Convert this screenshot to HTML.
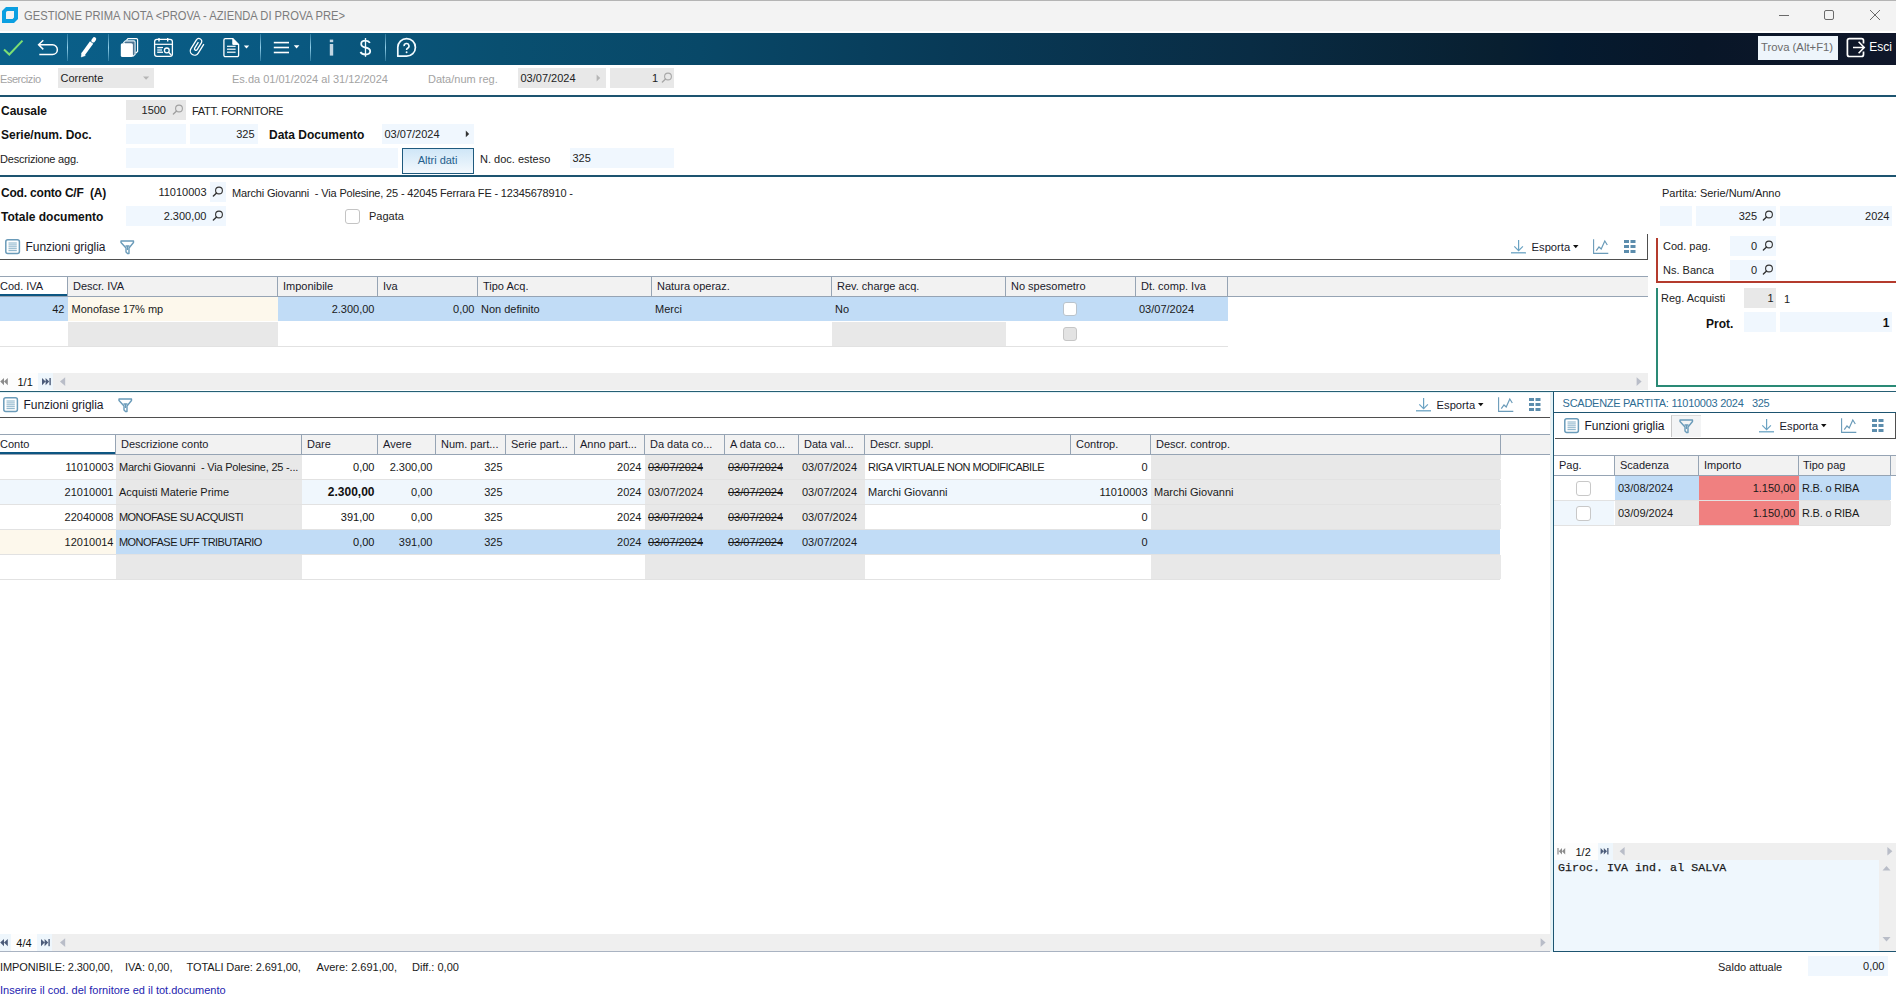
<!DOCTYPE html><html><head><meta charset="utf-8"><style>
html,body{margin:0;padding:0;width:1896px;height:996px;overflow:hidden;background:#fff;}
body{position:relative;font-family:"Liberation Sans",sans-serif;}
.a{position:absolute;}
.t{position:absolute;white-space:pre;}
svg.a{overflow:visible;}
</style></head><body>
<div class="a" style="left:0px;top:0px;width:1896px;height:31px;background:#f3f3f3;"></div>
<div class="a" style="left:0px;top:0px;width:1896px;height:1px;background:#b4b4b4;"></div>
<div class="a" style="left:0px;top:31px;width:1896px;height:1px;background:#ffffff;"></div>
<svg class="a" style="left:2px;top:7px;" width="16" height="16" viewBox="2 7 16 16"><path d="M6,7 H18 V19 L14,23 H2 V11 Z M7.6,11 H14 V17.6 L12.6,19 H6 V12.6 Q6,11 7.6,11 Z" fill="#0b9fe1" fill-rule="evenodd"/></svg>
<div class="t" style="top:9.83px;font-size:12.6px;line-height:12.6px;font-weight:400;color:#7c7c7c;left:24px;transform:scaleX(0.889);transform-origin:0 0;">GESTIONE PRIMA NOTA &lt;PROVA - AZIENDA DI PROVA PRE&gt;</div>
<svg class="a" style="left:1776px;top:8px;" width="110" height="16" viewBox="1776 8 110 16"><line x1="1779" y1="15.5" x2="1789" y2="15.5" stroke="#6a6a6a" stroke-width="1"/><rect x="1824.5" y="10.5" width="9" height="9" rx="1.5" fill="none" stroke="#6a6a6a" stroke-width="1"/><path d="M1870,10 L1880,20 M1880,10 L1870,20" stroke="#6a6a6a" stroke-width="1"/></svg>
<div class="a" style="left:0;top:33px;width:1896px;height:32px;background:linear-gradient(90deg,#0a608a 0px,#095880 300px,#094f70 500px,#084868 700px,#083a57 950px,#092c44 1250px,#081f30 1500px,#051b30 1560px,#081628 1700px,#10172a 1896px);"></div>
<div class="a" style="left:67px;top:34px;width:1px;height:27px;background:linear-gradient(180deg,rgba(140,210,240,0.25),rgba(160,220,245,0.9) 50%,rgba(140,210,240,0.25));"></div>
<div class="a" style="left:108px;top:34px;width:1px;height:27px;background:linear-gradient(180deg,rgba(140,210,240,0.25),rgba(160,220,245,0.9) 50%,rgba(140,210,240,0.25));"></div>
<div class="a" style="left:260px;top:34px;width:1px;height:27px;background:linear-gradient(180deg,rgba(140,210,240,0.25),rgba(160,220,245,0.9) 50%,rgba(140,210,240,0.25));"></div>
<div class="a" style="left:310px;top:34px;width:1px;height:27px;background:linear-gradient(180deg,rgba(140,210,240,0.25),rgba(160,220,245,0.9) 50%,rgba(140,210,240,0.25));"></div>
<div class="a" style="left:385px;top:34px;width:1px;height:27px;background:linear-gradient(180deg,rgba(140,210,240,0.25),rgba(160,220,245,0.9) 50%,rgba(140,210,240,0.25));"></div>
<svg class="a" style="left:2px;top:38px;" width="24" height="20" viewBox="2 38 24 20"><polyline points="4,49.5 9.3,54.5 22.5,40.6" fill="none" stroke="#7ddf73" stroke-width="2"/></svg>
<svg class="a" style="left:36px;top:38px;" width="24" height="20" viewBox="36 38 24 20"><path d="M43.3,40.2 L38.6,44.8 L43.3,49.4 M38.6,44.8 H52.5 A4.85,4.85 0 0 1 52.5,54.5 H39.3" fill="none" stroke="#fff" stroke-width="1.5"/></svg>
<svg class="a" style="left:78px;top:36px;" width="22" height="24" viewBox="78 36 22 24"><line x1="83.0" y1="54.4" x2="91.6" y2="42.5" stroke="#fff" stroke-width="4"/><path d="M81.3,57 L85.3,55.5 L81.8,52.9 Z" fill="#fff" stroke="#fff" stroke-width="0.6" stroke-linejoin="round"/><line x1="93.2" y1="40.6" x2="94.3" y2="39.1" stroke="#fff" stroke-width="3.8" stroke-linecap="round"/></svg>
<svg class="a" style="left:118px;top:36px;" width="24" height="24" viewBox="118 36 24 24"><path d="M126.4,40.4 L128,38.6 H136.4 Q137.6,38.6 137.6,39.8 V51.4 L135.6,53.2" fill="none" stroke="#fff" stroke-width="1.2"/><path d="M123.6,42.6 L125.4,40.9 H134 Q135.1,40.9 135.1,42 V54.4 L133,56.2 Z" fill="#4d7593" stroke="#e8f4fb" stroke-width="1.1"/><rect x="120.8" y="43.2" width="12.1" height="13.9" rx="1.6" fill="#fff"/></svg>
<svg class="a" style="left:152px;top:36px;" width="24" height="24" viewBox="152 36 24 24"><rect x="154.6" y="39.4" width="17.8" height="16.9" rx="2.4" fill="none" stroke="#fff" stroke-width="1.3"/><line x1="159" y1="38" x2="159" y2="41.4" stroke="#fff" stroke-width="1.4"/><line x1="167.7" y1="38" x2="167.7" y2="41.4" stroke="#fff" stroke-width="1.4"/><line x1="155" y1="44.3" x2="172" y2="44.3" stroke="#fff" stroke-width="1.2"/><rect x="157.2" y="46.9" width="5.8" height="1.2" fill="#fff"/><rect x="157.2" y="48.6" width="4.8" height="2.6" fill="#8fbcd6"/><rect x="157.2" y="51.6" width="5.8" height="1.3" fill="#fff"/><circle cx="166.8" cy="50.4" r="2.4" fill="none" stroke="#fff" stroke-width="1.3"/><line x1="168.6" y1="52.3" x2="171.2" y2="55" stroke="#fff" stroke-width="1.3"/></svg>
<svg class="a" style="left:186px;top:36px;" width="22" height="24" viewBox="186 36 22 24"><g transform="translate(194.6,50.9) rotate(32)"><path d="M4.3,-10.6 V0 A4.3,4.3 0 0 1 -4.3,0 V-10.3 A2.9,2.9 0 0 1 1.5,-10.3 V-2.4 A1.45,1.45 0 0 1 -1.4,-2.4 V-9.4" fill="none" stroke="#fff" stroke-width="1.3"/></g></svg>
<svg class="a" style="left:222px;top:36px;" width="30" height="24" viewBox="222 36 30 24"><path d="M225.3,38.6 H232.8 L238.6,44.4 V55.2 A1.4,1.4 0 0 1 237.2,56.6 H225.3 A1.4,1.4 0 0 1 223.9,55.2 V40 A1.4,1.4 0 0 1 225.3,38.6 Z" fill="none" stroke="#fff" stroke-width="1.3"/><path d="M232.8,38.6 V44.4 H238.6" fill="#fff" stroke="#fff" stroke-width="1"/><line x1="227" y1="46.3" x2="235.6" y2="46.3" stroke="#fff" stroke-width="1.2"/><line x1="227" y1="49.2" x2="235.6" y2="49.2" stroke="#fff" stroke-width="1.2"/><line x1="227" y1="52.2" x2="235.6" y2="52.2" stroke="#fff" stroke-width="1.2"/><path d="M243.8,45.6 H249.2 L246.5,48.6 Z" fill="#fff"/></svg>
<svg class="a" style="left:270px;top:36px;" width="34" height="24" viewBox="270 36 34 24"><line x1="273.8" y1="42.6" x2="289" y2="42.6" stroke="#fff" stroke-width="1.6"/><line x1="273.8" y1="47.5" x2="289" y2="47.5" stroke="#fff" stroke-width="1.6"/><line x1="273.8" y1="52.5" x2="289" y2="52.5" stroke="#fff" stroke-width="1.6"/><path d="M293.8,45.2 H299.4 L296.6,48.4 Z" fill="#fff"/></svg>
<svg class="a" style="left:326px;top:36px;" width="10" height="24" viewBox="326 36 10 24"><rect x="329.8" y="39.6" width="3.4" height="2.6" fill="#c2d6e3"/><rect x="329.8" y="44" width="3.4" height="11.6" fill="#c2d6e3"/></svg>
<svg class="a" style="left:356px;top:36px;" width="20" height="24" viewBox="356 36 20 24"><path d="M369.9,42.9 Q368.6,40.7 365.5,40.7 Q361.2,40.7 361.2,43.9 Q361.2,46.6 365.5,47.5 Q370.2,48.4 370.2,51.3 Q370.2,54.5 365.5,54.5 Q361.8,54.5 360.4,52" fill="none" stroke="#f2fbff" stroke-width="1.8"/><line x1="365.5" y1="38" x2="365.5" y2="56.8" stroke="#f2fbff" stroke-width="1.3"/></svg>
<svg class="a" style="left:394px;top:36px;" width="26" height="24" viewBox="394 36 26 24"><path d="M397.8,56.2 V47.3 A8.8,8.8 0 1 1 406.6,56.2 Z" fill="none" stroke="#f2fbff" stroke-width="1.7" stroke-linejoin="round"/><path d="M404.1,46.1 A2.45,2.45 0 1 1 407.6,48.2 Q406.6,48.9 406.6,50" fill="none" stroke="#f2fbff" stroke-width="1.6"/><circle cx="406.6" cy="52.2" r="0.95" fill="#f2fbff"/></svg>
<div class="a" style="left:1758px;top:36px;width:80px;height:24px;background:#eef5fb;"></div>
<div class="t" style="top:42.43px;font-size:11.3px;line-height:11.3px;font-weight:400;color:#6b6b6b;left:1761px;">Trova (Alt+F1)</div>
<svg class="a" style="left:1844px;top:36px;" width="24" height="24" viewBox="1844 36 24 24"><path d="M1863.5,43.4 V40.6 A2,2 0 0 0 1861.5,38.6 H1849.4 A2,2 0 0 0 1847.4,40.6 V54.5 A2,2 0 0 0 1849.4,56.5 H1861.5 A2,2 0 0 0 1863.5,54.5 V51.6" fill="none" stroke="#fff" stroke-width="1.7"/><path d="M1853,47.5 H1864 M1858.6,41.8 L1864.2,47.5 L1858.6,53.2" fill="none" stroke="#fff" stroke-width="1.6"/></svg>
<div class="t" style="top:41.34px;font-size:12px;line-height:12px;font-weight:400;color:#fff;left:1869.3px;">Esci</div>
<div class="t" style="top:73.69px;font-size:11px;line-height:11px;font-weight:400;color:#a3a3a3;left:0px;letter-spacing:-0.45px;">Esercizio</div>
<div class="a" style="left:58px;top:68px;width:96px;height:20px;background:#e8e8e8;"></div>
<div class="t" style="top:72.69px;font-size:11px;line-height:11px;font-weight:400;color:#222;left:60.5px;">Corrente</div>
<svg class="a" style="left:140px;top:74px;" width="12" height="8" viewBox="140 74 12 8"><path d="M143,76.6 H149.2 L146.1,79.8 Z" fill="#b5b5b5"/></svg>
<div class="t" style="top:73.69px;font-size:11px;line-height:11px;font-weight:400;color:#a3a3a3;left:232px;">Es.da 01/01/2024 al 31/12/2024</div>
<div class="t" style="top:73.69px;font-size:11px;line-height:11px;font-weight:400;color:#a3a3a3;left:428px;">Data/num reg.</div>
<div class="a" style="left:518px;top:68px;width:88px;height:20px;background:#e8e8e8;"></div>
<div class="t" style="top:72.69px;font-size:11px;line-height:11px;font-weight:400;color:#222;left:520.5px;">03/07/2024</div>
<svg class="a" style="left:594px;top:72px;" width="10" height="12" viewBox="594 72 10 12"><path d="M596.6,74.6 V81.4 L600.2,78 Z" fill="#b5b5b5"/></svg>
<div class="a" style="left:610px;top:68px;width:64px;height:20px;background:#e8e8e8;"></div>
<div class="t" style="top:72.69px;font-size:11px;line-height:11px;font-weight:400;color:#222;right:1238px;text-align:right;">1</div>
<svg class="a" style="left:661px;top:72px;" width="12" height="12" viewBox="661 72 12 12"><circle cx="668" cy="76.5" r="3.4" fill="none" stroke="#a8a8a8" stroke-width="1.1"/><line x1="665.6" y1="78.9" x2="662.4" y2="82.1" stroke="#a8a8a8" stroke-width="1.4" stroke-linecap="round"/></svg>
<div class="a" style="left:0px;top:95px;width:1896px;height:2px;background:#1d5470;"></div>
<div class="t" style="top:104.84px;font-size:12px;line-height:12px;font-weight:700;color:#111;left:1px;">Causale</div>
<div class="a" style="left:126px;top:100px;width:60px;height:20px;background:#e8e8e8;"></div>
<div class="t" style="top:104.69px;font-size:11px;line-height:11px;font-weight:400;color:#222;right:1730px;text-align:right;">1500</div>
<svg class="a" style="left:172px;top:104px;" width="12" height="12" viewBox="172 104 12 12"><circle cx="179" cy="108.5" r="3.4" fill="none" stroke="#a0a0a0" stroke-width="1.1"/><line x1="176.6" y1="110.9" x2="173.4" y2="114.1" stroke="#a0a0a0" stroke-width="1.4" stroke-linecap="round"/></svg>
<div class="t" style="top:105.69px;font-size:11px;line-height:11px;font-weight:400;color:#222;left:192px;letter-spacing:-0.3px;">FATT. FORNITORE</div>
<div class="t" style="top:128.84px;font-size:12px;line-height:12px;font-weight:700;color:#111;left:1px;">Serie/num. Doc.</div>
<div class="a" style="left:126px;top:124px;width:60px;height:20px;background:#f0f7fe;"></div>
<div class="a" style="left:190px;top:124px;width:68px;height:20px;background:#f0f7fe;"></div>
<div class="t" style="top:128.69px;font-size:11px;line-height:11px;font-weight:400;color:#222;right:1641.5px;text-align:right;">325</div>
<div class="t" style="top:128.84px;font-size:12px;line-height:12px;font-weight:700;color:#111;left:269px;">Data Documento</div>
<div class="a" style="left:382px;top:124px;width:92px;height:20px;background:#f0f7fe;"></div>
<div class="t" style="top:128.69px;font-size:11px;line-height:11px;font-weight:400;color:#222;left:384.5px;">03/07/2024</div>
<svg class="a" style="left:462px;top:128px;" width="10" height="12" viewBox="462 128 10 12"><path d="M465.8,130.6 V137.2 L469.2,133.9 Z" fill="#333"/></svg>
<div class="t" style="top:153.69px;font-size:11px;line-height:11px;font-weight:400;color:#222;left:0px;letter-spacing:-0.2px;">Descrizione agg.</div>
<div class="a" style="left:126px;top:148px;width:272px;height:20px;background:#f0f7fe;"></div>
<div class="a" style="left:402px;top:148px;width:70px;height:24px;border:1px solid #1f5a7e;background:linear-gradient(180deg,#cfe6f7 0%,#f4f9fd 100%);"></div>
<div class="t" style="top:155.19px;font-size:11px;line-height:11px;font-weight:400;color:#24608c;left:401.5px;width:72px;text-align:center;">Altri dati</div>
<div class="t" style="top:153.69px;font-size:11px;line-height:11px;font-weight:400;color:#222;left:480px;">N. doc. esteso</div>
<div class="a" style="left:570px;top:148px;width:104px;height:20px;background:#f0f7fe;"></div>
<div class="t" style="top:152.69px;font-size:11px;line-height:11px;font-weight:400;color:#222;left:572.5px;">325</div>
<div class="a" style="left:0px;top:175px;width:1896px;height:2px;background:#1d5470;"></div>
<div class="t" style="top:186.84px;font-size:12px;line-height:12px;font-weight:700;color:#111;left:1px;letter-spacing:-0.19px;">Cod. conto C/F  (A)</div>
<div class="t" style="top:186.69px;font-size:11px;line-height:11px;font-weight:400;color:#222;right:1689.5px;text-align:right;">11010003</div>
<div class="a" style="left:210px;top:182px;width:16px;height:20px;background:#f0f7fe;"></div>
<svg class="a" style="left:212px;top:186px;" width="12" height="12" viewBox="212 186 12 12"><circle cx="219" cy="190.5" r="3.4" fill="none" stroke="#333" stroke-width="1.1"/><line x1="216.6" y1="192.9" x2="213.4" y2="196.1" stroke="#333" stroke-width="1.4" stroke-linecap="round"/></svg>
<div class="t" style="top:187.69px;font-size:11px;line-height:11px;font-weight:400;color:#222;left:232px;letter-spacing:-0.16px;">Marchi Giovanni  - Via Polesine, 25 - 42045 Ferrara FE - 12345678910 -</div>
<div class="t" style="top:210.84px;font-size:12px;line-height:12px;font-weight:700;color:#111;left:1px;">Totale documento</div>
<div class="a" style="left:126px;top:206px;width:100px;height:20px;background:#f0f7fe;"></div>
<div class="t" style="top:210.69px;font-size:11px;line-height:11px;font-weight:400;color:#222;right:1689.5px;text-align:right;">2.300,00</div>
<svg class="a" style="left:212px;top:210px;" width="12" height="12" viewBox="212 210 12 12"><circle cx="219" cy="214.5" r="3.4" fill="none" stroke="#333" stroke-width="1.1"/><line x1="216.6" y1="216.9" x2="213.4" y2="220.1" stroke="#333" stroke-width="1.4" stroke-linecap="round"/></svg>
<div class="a" style="left:345px;top:209px;width:13px;height:13px;border:1px solid #c4c4c4;border-radius:3px;background:#fff;"></div>
<div class="t" style="top:210.69px;font-size:11px;line-height:11px;font-weight:400;color:#222;left:369px;">Pagata</div>
<div class="t" style="top:187.69px;font-size:11px;line-height:11px;font-weight:400;color:#222;left:1662px;">Partita: Serie/Num/Anno</div>
<div class="a" style="left:1660px;top:206px;width:32px;height:20px;background:#f0f7fe;"></div>
<div class="a" style="left:1696px;top:206px;width:80px;height:20px;background:#f0f7fe;"></div>
<div class="t" style="top:210.69px;font-size:11px;line-height:11px;font-weight:400;color:#222;right:139px;text-align:right;">325</div>
<svg class="a" style="left:1762px;top:210px;" width="12" height="12" viewBox="1762 210 12 12"><circle cx="1769" cy="214.5" r="3.4" fill="none" stroke="#333" stroke-width="1.1"/><line x1="1766.6" y1="216.9" x2="1763.4" y2="220.1" stroke="#333" stroke-width="1.4" stroke-linecap="round"/></svg>
<div class="a" style="left:1780px;top:206px;width:112px;height:20px;background:#f0f7fe;"></div>
<div class="t" style="top:210.69px;font-size:11px;line-height:11px;font-weight:400;color:#222;right:6.5px;text-align:right;">2024</div>
<svg class="a" style="left:5px;top:239px;" width="16" height="16" viewBox="5 239 16 16"><rect x="5.8" y="239.8" width="13.6" height="13.6" rx="2" fill="none" stroke="#6a9bb9" stroke-width="1.5"/><line x1="8.5" y1="243.0" x2="16.8" y2="243.0" stroke="#8fb6cc" stroke-width="1.1"/><line x1="8.5" y1="244.9" x2="16.8" y2="244.9" stroke="#8fb6cc" stroke-width="1.1"/><line x1="8.5" y1="246.8" x2="16.8" y2="246.8" stroke="#8fb6cc" stroke-width="1.1"/><line x1="8.5" y1="248.7" x2="16.8" y2="248.7" stroke="#8fb6cc" stroke-width="1.1"/><line x1="8.5" y1="250.6" x2="16.8" y2="250.6" stroke="#8fb6cc" stroke-width="1.1"/></svg>
<div class="t" style="top:240.84px;font-size:12px;line-height:12px;font-weight:400;color:#1a1a2a;left:25.5px;letter-spacing:-0.05px;">Funzioni griglia</div>
<svg class="a" style="left:120px;top:239px;" width="16" height="16" viewBox="120 239 16 16"><path d="M121,241 H133.5 V242.5 L129,248 V253.5 L127.5,253.5 L126,252 V248 L121,242.5 Z" fill="none" stroke="#6a9bb9" stroke-width="1.4" stroke-linejoin="round"/><path d="M125.5,246 H129.5 M127.5,246 V250" stroke="#6a9bb9" stroke-width="1.4"/></svg>
<svg class="a" style="left:1511px;top:240px;" width="16" height="16" viewBox="1511 240 16 16"><line x1="1518.6" y1="240" x2="1518.6" y2="250.5" stroke="#6ba3c3" stroke-width="1.2"/><polyline points="1514.3,246.3 1518.6,250.6 1522.9,246.3" fill="none" stroke="#6ba3c3" stroke-width="1.2"/><line x1="1511" y1="252.8" x2="1526" y2="252.8" stroke="#6ba3c3" stroke-width="1.3"/></svg>
<div class="t" style="top:241.52px;font-size:11.2px;line-height:11.2px;font-weight:400;color:#1a1a2a;left:1531.6px;">Esporta</div>
<svg class="a" style="left:1572px;top:244px;" width="8" height="6" viewBox="1572 244 8 6"><path d="M1573,245 H1578.5 L1575.75,248.2 Z" fill="#111"/></svg>
<svg class="a" style="left:1593px;top:239px;" width="17" height="16" viewBox="1593 239 17 16"><polyline points="1593.6,239.2 1593.6,253.4 1608.3,253.4" fill="none" stroke="#6a9bb9" stroke-width="1.1"/><polyline points="1596.3,250.6 1599,247 1601.2,249 1604.8,241 1607.3,245" fill="none" stroke="#6a9bb9" stroke-width="1.2"/></svg>
<svg class="a" style="left:1624px;top:239px;" width="14" height="16" viewBox="1624 239 14 16"><rect x="1624.0" y="240" width="5" height="3" fill="#5c8dad"/><rect x="1630.5" y="240" width="5" height="3" fill="#5c8dad"/><rect x="1624.0" y="245" width="5" height="3" fill="#5c8dad"/><rect x="1630.5" y="245" width="5" height="3" fill="#5c8dad"/><rect x="1624.0" y="250" width="5" height="3" fill="#5c8dad"/><rect x="1630.5" y="250" width="5" height="3" fill="#5c8dad"/></svg>
<div class="a" style="left:0px;top:259px;width:1647px;height:1px;background:#4f4f4f;"></div>
<div class="a" style="left:1647px;top:234px;width:1px;height:26px;background:#4f4f4f;"></div>
<div class="a" style="left:0px;top:276px;width:1648px;height:21px;background:#f2f2f2;"></div>
<div class="a" style="left:0px;top:276px;width:1648px;height:1px;background:#96a4b4;"></div>
<div class="a" style="left:0px;top:296px;width:1648px;height:1px;background:#96a4b4;"></div>
<div class="a" style="left:0px;top:277px;width:67px;height:19px;background:#fff;"></div>
<div class="a" style="left:0px;top:294px;width:67px;height:2px;background:#0d5682;"></div>
<div class="a" style="left:67px;top:276px;width:1px;height:21px;background:#96a4b4;"></div>
<div class="a" style="left:277px;top:276px;width:1px;height:21px;background:#96a4b4;"></div>
<div class="a" style="left:377px;top:276px;width:1px;height:21px;background:#96a4b4;"></div>
<div class="a" style="left:477px;top:276px;width:1px;height:21px;background:#96a4b4;"></div>
<div class="a" style="left:651px;top:276px;width:1px;height:21px;background:#96a4b4;"></div>
<div class="a" style="left:831px;top:276px;width:1px;height:21px;background:#96a4b4;"></div>
<div class="a" style="left:1005px;top:276px;width:1px;height:21px;background:#96a4b4;"></div>
<div class="a" style="left:1135px;top:276px;width:1px;height:21px;background:#96a4b4;"></div>
<div class="a" style="left:1227px;top:276px;width:1px;height:21px;background:#96a4b4;"></div>
<div class="t" style="top:281.19px;font-size:11px;line-height:11px;font-weight:400;color:#1a1a2a;left:0px;">Cod. IVA</div>
<div class="t" style="top:281.19px;font-size:11px;line-height:11px;font-weight:400;color:#1a1a2a;left:73px;">Descr. IVA</div>
<div class="t" style="top:281.19px;font-size:11px;line-height:11px;font-weight:400;color:#1a1a2a;left:283px;">Imponibile</div>
<div class="t" style="top:281.19px;font-size:11px;line-height:11px;font-weight:400;color:#1a1a2a;left:383px;">Iva</div>
<div class="t" style="top:281.19px;font-size:11px;line-height:11px;font-weight:400;color:#1a1a2a;left:483px;">Tipo Acq.</div>
<div class="t" style="top:281.19px;font-size:11px;line-height:11px;font-weight:400;color:#1a1a2a;left:657px;">Natura operaz.</div>
<div class="t" style="top:281.19px;font-size:11px;line-height:11px;font-weight:400;color:#1a1a2a;left:837px;">Rev. charge acq.</div>
<div class="t" style="top:281.19px;font-size:11px;line-height:11px;font-weight:400;color:#1a1a2a;left:1011px;">No spesometro</div>
<div class="t" style="top:281.19px;font-size:11px;line-height:11px;font-weight:400;color:#1a1a2a;left:1141px;">Dt. comp. Iva</div>
<div class="a" style="left:0px;top:297px;width:1228px;height:24px;background:#c1dcf6;"></div>
<div class="a" style="left:68px;top:297px;width:210px;height:24px;background:#fdf8ec;"></div>
<div class="t" style="top:303.69px;font-size:11px;line-height:11px;font-weight:400;color:#1a1a1a;right:1831.5px;text-align:right;">42</div>
<div class="t" style="top:303.69px;font-size:11px;line-height:11px;font-weight:400;color:#1a1a1a;left:71.5px;">Monofase 17% mp</div>
<div class="t" style="top:303.69px;font-size:11px;line-height:11px;font-weight:400;color:#1a1a1a;right:1521.5px;text-align:right;">2.300,00</div>
<div class="t" style="top:303.69px;font-size:11px;line-height:11px;font-weight:400;color:#1a1a1a;right:1421.5px;text-align:right;">0,00</div>
<div class="t" style="top:303.69px;font-size:11px;line-height:11px;font-weight:400;color:#1a1a1a;left:481px;">Non definito</div>
<div class="t" style="top:303.69px;font-size:11px;line-height:11px;font-weight:400;color:#1a1a1a;left:655px;">Merci</div>
<div class="t" style="top:303.69px;font-size:11px;line-height:11px;font-weight:400;color:#1a1a1a;left:835px;">No</div>
<div class="a" style="left:1063px;top:302px;width:12px;height:12px;border:1px solid #b9c3cc;border-radius:3px;background:#fff;"></div>
<div class="t" style="top:303.69px;font-size:11px;line-height:11px;font-weight:400;color:#1a1a1a;left:1139px;">03/07/2024</div>
<div class="a" style="left:68px;top:322px;width:210px;height:24px;background:#e8e8e8;"></div>
<div class="a" style="left:832px;top:322px;width:174px;height:24px;background:#e8e8e8;"></div>
<div class="a" style="left:1063px;top:327px;width:12px;height:12px;border:1px solid #c6c6c6;border-radius:3px;background:#e3e3e3;"></div>
<div class="a" style="left:0px;top:346px;width:1228px;height:1px;background:#e2e2e2;"></div>
<div class="a" style="left:0px;top:373px;width:1648px;height:17px;background:#efefef;"></div>
<div class="a" style="left:0px;top:373px;width:39px;height:17px;background:#fdfdfd;"></div>
<div class="a" style="left:38px;top:373px;width:15px;height:17px;background:#eef6fc;"></div>
<svg class="a" style="left:0px;top:377px;" width="10" height="10" viewBox="0 377 10 10"><path d="M0.2,381.6 L4,378 V385.2 Z M4,381.6 L7.8,378 V385.2 Z" fill="#8c8c8c"/></svg>
<div class="t" style="top:377.19px;font-size:11px;line-height:11px;font-weight:400;color:#111;left:17.5px;">1/1</div>
<svg class="a" style="left:41px;top:377px;" width="12" height="10" viewBox="41 377 12 10"><path d="M42,378 L45.6,381.6 L42,385.2 Z M45.6,378 L49.2,381.6 L45.6,385.2 Z" fill="#4c5c7a"/><rect x="49.4" y="378" width="1.4" height="7.2" fill="#4c5c7a"/></svg>
<svg class="a" style="left:59px;top:376px;" width="8" height="12" viewBox="59 376 8 12"><path d="M65.2,377.2 V386 L60,381.6 Z" fill="#b9bdc8"/></svg>
<svg class="a" style="left:1636px;top:376px;" width="8" height="12" viewBox="1636 376 8 12"><path d="M1636.6,377.2 V386 L1641.6,381.6 Z" fill="#b9bdc8"/></svg>
<div class="a" style="left:1656px;top:281px;width:240px;height:2px;background:#b43b2d;"></div>
<div class="a" style="left:1656px;top:238px;width:2px;height:45px;background:#b43b2d;"></div>
<div class="t" style="top:241.19px;font-size:11px;line-height:11px;font-weight:400;color:#222;left:1663px;">Cod. pag.</div>
<div class="a" style="left:1730px;top:236px;width:46px;height:20px;background:#f0f7fe;"></div>
<div class="t" style="top:240.69px;font-size:11px;line-height:11px;font-weight:400;color:#222;right:139px;text-align:right;">0</div>
<svg class="a" style="left:1762px;top:240px;" width="12" height="12" viewBox="1762 240 12 12"><circle cx="1769" cy="244.5" r="3.4" fill="none" stroke="#333" stroke-width="1.1"/><line x1="1766.6" y1="246.9" x2="1763.4" y2="250.1" stroke="#333" stroke-width="1.4" stroke-linecap="round"/></svg>
<div class="t" style="top:265.19px;font-size:11px;line-height:11px;font-weight:400;color:#222;left:1663px;">Ns. Banca</div>
<div class="a" style="left:1730px;top:260px;width:46px;height:20px;background:#f0f7fe;"></div>
<div class="t" style="top:264.69px;font-size:11px;line-height:11px;font-weight:400;color:#222;right:139px;text-align:right;">0</div>
<svg class="a" style="left:1762px;top:264px;" width="12" height="12" viewBox="1762 264 12 12"><circle cx="1769" cy="268.5" r="3.4" fill="none" stroke="#333" stroke-width="1.1"/><line x1="1766.6" y1="270.9" x2="1763.4" y2="274.1" stroke="#333" stroke-width="1.4" stroke-linecap="round"/></svg>
<div class="a" style="left:1656px;top:288px;width:2px;height:99px;background:#2a8a76;"></div>
<div class="a" style="left:1656px;top:385px;width:240px;height:2px;background:#2a8a76;"></div>
<div class="t" style="top:292.69px;font-size:11px;line-height:11px;font-weight:400;color:#222;left:1661px;">Reg. Acquisti</div>
<div class="a" style="left:1744px;top:288px;width:32px;height:20px;background:#e8e8e8;"></div>
<div class="t" style="top:292.69px;font-size:11px;line-height:11px;font-weight:400;color:#222;right:122.5px;text-align:right;">1</div>
<div class="t" style="top:293.69px;font-size:11px;line-height:11px;font-weight:400;color:#222;left:1784px;">1</div>
<div class="t" style="top:317.84px;font-size:12px;line-height:12px;font-weight:700;color:#111;left:1706px;">Prot.</div>
<div class="a" style="left:1744px;top:312px;width:32px;height:20px;background:#f0f7fe;"></div>
<div class="a" style="left:1780px;top:312px;width:112px;height:20px;background:#f0f7fe;"></div>
<div class="t" style="top:316.84px;font-size:12px;line-height:12px;font-weight:700;color:#111;right:6.5px;text-align:right;">1</div>
<div class="a" style="left:0px;top:391px;width:1896px;height:1px;background:#265f74;"></div>
<div class="a" style="left:0px;top:392px;width:1550px;height:1px;background:#e3f2f7;"></div>
<svg class="a" style="left:3px;top:397px;" width="16" height="16" viewBox="3 397 16 16"><rect x="3.8" y="397.8" width="13.6" height="13.6" rx="2" fill="none" stroke="#6a9bb9" stroke-width="1.5"/><line x1="6.5" y1="401.0" x2="14.8" y2="401.0" stroke="#8fb6cc" stroke-width="1.1"/><line x1="6.5" y1="402.9" x2="14.8" y2="402.9" stroke="#8fb6cc" stroke-width="1.1"/><line x1="6.5" y1="404.8" x2="14.8" y2="404.8" stroke="#8fb6cc" stroke-width="1.1"/><line x1="6.5" y1="406.7" x2="14.8" y2="406.7" stroke="#8fb6cc" stroke-width="1.1"/><line x1="6.5" y1="408.6" x2="14.8" y2="408.6" stroke="#8fb6cc" stroke-width="1.1"/></svg>
<div class="t" style="top:398.84px;font-size:12px;line-height:12px;font-weight:400;color:#1a1a2a;left:23.5px;letter-spacing:-0.05px;">Funzioni griglia</div>
<svg class="a" style="left:118px;top:397px;" width="16" height="16" viewBox="118 397 16 16"><path d="M119,399 H131.5 V400.5 L127,406 V411.5 L125.5,411.5 L124,410 V406 L119,400.5 Z" fill="none" stroke="#6a9bb9" stroke-width="1.4" stroke-linejoin="round"/><path d="M123.5,404 H127.5 M125.5,404 V408" stroke="#6a9bb9" stroke-width="1.4"/></svg>
<svg class="a" style="left:1416px;top:398px;" width="16" height="16" viewBox="1416 398 16 16"><line x1="1423.6" y1="398" x2="1423.6" y2="408.5" stroke="#6ba3c3" stroke-width="1.2"/><polyline points="1419.3,404.3 1423.6,408.6 1427.9,404.3" fill="none" stroke="#6ba3c3" stroke-width="1.2"/><line x1="1416" y1="410.8" x2="1431" y2="410.8" stroke="#6ba3c3" stroke-width="1.3"/></svg>
<div class="t" style="top:399.52px;font-size:11.2px;line-height:11.2px;font-weight:400;color:#1a1a2a;left:1436.6px;">Esporta</div>
<svg class="a" style="left:1477px;top:402px;" width="8" height="6" viewBox="1477 402 8 6"><path d="M1478,403 H1483.5 L1480.75,406.2 Z" fill="#111"/></svg>
<svg class="a" style="left:1498px;top:397px;" width="17" height="16" viewBox="1498 397 17 16"><polyline points="1498.6,397.2 1498.6,411.4 1513.3,411.4" fill="none" stroke="#6a9bb9" stroke-width="1.1"/><polyline points="1501.3,408.6 1504,405 1506.2,407 1509.8,399 1512.3,403" fill="none" stroke="#6a9bb9" stroke-width="1.2"/></svg>
<svg class="a" style="left:1529px;top:397px;" width="14" height="16" viewBox="1529 397 14 16"><rect x="1529.0" y="398" width="5" height="3" fill="#5c8dad"/><rect x="1535.5" y="398" width="5" height="3" fill="#5c8dad"/><rect x="1529.0" y="403" width="5" height="3" fill="#5c8dad"/><rect x="1535.5" y="403" width="5" height="3" fill="#5c8dad"/><rect x="1529.0" y="408" width="5" height="3" fill="#5c8dad"/><rect x="1535.5" y="408" width="5" height="3" fill="#5c8dad"/></svg>
<div class="a" style="left:0px;top:417px;width:1550px;height:1px;background:#4f4f4f;"></div>
<div class="a" style="left:0px;top:434px;width:1550px;height:21px;background:#f2f2f2;"></div>
<div class="a" style="left:0px;top:434px;width:1550px;height:1px;background:#96a4b4;"></div>
<div class="a" style="left:0px;top:454px;width:1550px;height:1px;background:#96a4b4;"></div>
<div class="a" style="left:0px;top:435px;width:115px;height:19px;background:#fff;"></div>
<div class="a" style="left:0px;top:452px;width:115px;height:2px;background:#0d5682;"></div>
<div class="a" style="left:115px;top:434px;width:1px;height:21px;background:#96a4b4;"></div>
<div class="a" style="left:301px;top:434px;width:1px;height:21px;background:#96a4b4;"></div>
<div class="a" style="left:377px;top:434px;width:1px;height:21px;background:#96a4b4;"></div>
<div class="a" style="left:435px;top:434px;width:1px;height:21px;background:#96a4b4;"></div>
<div class="a" style="left:505px;top:434px;width:1px;height:21px;background:#96a4b4;"></div>
<div class="a" style="left:574px;top:434px;width:1px;height:21px;background:#96a4b4;"></div>
<div class="a" style="left:644px;top:434px;width:1px;height:21px;background:#96a4b4;"></div>
<div class="a" style="left:724px;top:434px;width:1px;height:21px;background:#96a4b4;"></div>
<div class="a" style="left:798px;top:434px;width:1px;height:21px;background:#96a4b4;"></div>
<div class="a" style="left:864px;top:434px;width:1px;height:21px;background:#96a4b4;"></div>
<div class="a" style="left:1070px;top:434px;width:1px;height:21px;background:#96a4b4;"></div>
<div class="a" style="left:1150px;top:434px;width:1px;height:21px;background:#96a4b4;"></div>
<div class="a" style="left:1500px;top:434px;width:1px;height:21px;background:#96a4b4;"></div>
<div class="t" style="top:439.19px;font-size:11px;line-height:11px;font-weight:400;color:#1a1a2a;left:0px;">Conto</div>
<div class="t" style="top:439.19px;font-size:11px;line-height:11px;font-weight:400;color:#1a1a2a;left:121px;">Descrizione conto</div>
<div class="t" style="top:439.19px;font-size:11px;line-height:11px;font-weight:400;color:#1a1a2a;left:307px;">Dare</div>
<div class="t" style="top:439.19px;font-size:11px;line-height:11px;font-weight:400;color:#1a1a2a;left:383px;">Avere</div>
<div class="t" style="top:439.19px;font-size:11px;line-height:11px;font-weight:400;color:#1a1a2a;left:441px;">Num. part...</div>
<div class="t" style="top:439.19px;font-size:11px;line-height:11px;font-weight:400;color:#1a1a2a;left:511px;">Serie part...</div>
<div class="t" style="top:439.19px;font-size:11px;line-height:11px;font-weight:400;color:#1a1a2a;left:580px;">Anno part...</div>
<div class="t" style="top:439.19px;font-size:11px;line-height:11px;font-weight:400;color:#1a1a2a;left:650px;">Da data co...</div>
<div class="t" style="top:439.19px;font-size:11px;line-height:11px;font-weight:400;color:#1a1a2a;left:730px;">A data co...</div>
<div class="t" style="top:439.19px;font-size:11px;line-height:11px;font-weight:400;color:#1a1a2a;left:804px;">Data val...</div>
<div class="t" style="top:439.19px;font-size:11px;line-height:11px;font-weight:400;color:#1a1a2a;left:870px;">Descr. suppl.</div>
<div class="t" style="top:439.19px;font-size:11px;line-height:11px;font-weight:400;color:#1a1a2a;left:1076px;">Controp.</div>
<div class="t" style="top:439.19px;font-size:11px;line-height:11px;font-weight:400;color:#1a1a2a;left:1156px;">Descr. controp.</div>
<div class="a" style="left:0px;top:455px;width:1500px;height:24px;background:#fff;"></div>
<div class="a" style="left:116px;top:455px;width:186px;height:24px;background:#e8e8e8;"></div>
<div class="a" style="left:645px;top:455px;width:220px;height:24px;background:#e8e8e8;"></div>
<div class="a" style="left:1151px;top:455px;width:350px;height:24px;background:#e8e8e8;"></div>
<div class="a" style="left:0px;top:479px;width:1500px;height:1px;background:#e2e2e2;"></div>
<div class="t" style="top:461.69px;font-size:11px;line-height:11px;font-weight:400;color:#1a1a1a;right:1782.5px;text-align:right;">11010003</div>
<div class="t" style="top:461.69px;font-size:11px;line-height:11px;font-weight:400;color:#1a1a1a;left:119px;letter-spacing:-0.21px;">Marchi Giovanni  - Via Polesine, 25 -...</div>
<div class="t" style="top:461.69px;font-size:11px;line-height:11px;font-weight:400;color:#111;right:1521.5px;text-align:right;">0,00</div>
<div class="t" style="top:461.69px;font-size:11px;line-height:11px;font-weight:400;color:#1a1a1a;right:1463.5px;text-align:right;">2.300,00</div>
<div class="t" style="top:461.69px;font-size:11px;line-height:11px;font-weight:400;color:#1a1a1a;right:1393.5px;text-align:right;">325</div>
<div class="t" style="top:461.69px;font-size:11px;line-height:11px;font-weight:400;color:#1a1a1a;right:1254.5px;text-align:right;">2024</div>
<div class="t" style="top:461.69px;font-size:11px;line-height:11px;font-weight:400;color:#1a1a1a;left:648px;text-decoration:line-through;">03/07/2024</div>
<div class="t" style="top:461.69px;font-size:11px;line-height:11px;font-weight:400;color:#1a1a1a;left:728px;text-decoration:line-through;">03/07/2024</div>
<div class="t" style="top:461.69px;font-size:11px;line-height:11px;font-weight:400;color:#1a1a1a;left:802px;">03/07/2024</div>
<div class="t" style="top:461.69px;font-size:11px;line-height:11px;font-weight:400;color:#1a1a1a;left:868px;letter-spacing:-0.5px;">RIGA VIRTUALE NON MODIFICABILE</div>
<div class="t" style="top:461.69px;font-size:11px;line-height:11px;font-weight:400;color:#1a1a1a;right:748.5px;text-align:right;">0</div>
<div class="a" style="left:0px;top:480px;width:1500px;height:24px;background:#f0f7fd;"></div>
<div class="a" style="left:116px;top:480px;width:186px;height:24px;background:#e8e8e8;"></div>
<div class="a" style="left:645px;top:480px;width:220px;height:24px;background:#e8e8e8;"></div>
<div class="a" style="left:1151px;top:480px;width:350px;height:24px;background:#e8e8e8;"></div>
<div class="a" style="left:0px;top:504px;width:1500px;height:1px;background:#e2e2e2;"></div>
<div class="t" style="top:486.69px;font-size:11px;line-height:11px;font-weight:400;color:#1a1a1a;right:1782.5px;text-align:right;">21010001</div>
<div class="t" style="top:486.69px;font-size:11px;line-height:11px;font-weight:400;color:#1a1a1a;left:119px;">Acquisti Materie Prime</div>
<div class="t" style="top:485.84px;font-size:12px;line-height:12px;font-weight:700;color:#111;right:1521.5px;text-align:right;">2.300,00</div>
<div class="t" style="top:486.69px;font-size:11px;line-height:11px;font-weight:400;color:#1a1a1a;right:1463.5px;text-align:right;">0,00</div>
<div class="t" style="top:486.69px;font-size:11px;line-height:11px;font-weight:400;color:#1a1a1a;right:1393.5px;text-align:right;">325</div>
<div class="t" style="top:486.69px;font-size:11px;line-height:11px;font-weight:400;color:#1a1a1a;right:1254.5px;text-align:right;">2024</div>
<div class="t" style="top:486.69px;font-size:11px;line-height:11px;font-weight:400;color:#1a1a1a;left:648px;">03/07/2024</div>
<div class="t" style="top:486.69px;font-size:11px;line-height:11px;font-weight:400;color:#1a1a1a;left:728px;text-decoration:line-through;">03/07/2024</div>
<div class="t" style="top:486.69px;font-size:11px;line-height:11px;font-weight:400;color:#1a1a1a;left:802px;">03/07/2024</div>
<div class="t" style="top:486.69px;font-size:11px;line-height:11px;font-weight:400;color:#1a1a1a;left:868px;">Marchi Giovanni</div>
<div class="t" style="top:486.69px;font-size:11px;line-height:11px;font-weight:400;color:#1a1a1a;right:748.5px;text-align:right;">11010003</div>
<div class="t" style="top:486.69px;font-size:11px;line-height:11px;font-weight:400;color:#1a1a1a;left:1154px;">Marchi Giovanni</div>
<div class="a" style="left:0px;top:505px;width:1500px;height:24px;background:#fff;"></div>
<div class="a" style="left:116px;top:505px;width:186px;height:24px;background:#e8e8e8;"></div>
<div class="a" style="left:645px;top:505px;width:220px;height:24px;background:#e8e8e8;"></div>
<div class="a" style="left:1151px;top:505px;width:350px;height:24px;background:#e8e8e8;"></div>
<div class="a" style="left:0px;top:529px;width:1500px;height:1px;background:#e2e2e2;"></div>
<div class="t" style="top:511.69px;font-size:11px;line-height:11px;font-weight:400;color:#1a1a1a;right:1782.5px;text-align:right;">22040008</div>
<div class="t" style="top:511.69px;font-size:11px;line-height:11px;font-weight:400;color:#1a1a1a;left:119px;letter-spacing:-0.55px;">MONOFASE SU ACQUISTI</div>
<div class="t" style="top:511.69px;font-size:11px;line-height:11px;font-weight:400;color:#111;right:1521.5px;text-align:right;">391,00</div>
<div class="t" style="top:511.69px;font-size:11px;line-height:11px;font-weight:400;color:#1a1a1a;right:1463.5px;text-align:right;">0,00</div>
<div class="t" style="top:511.69px;font-size:11px;line-height:11px;font-weight:400;color:#1a1a1a;right:1393.5px;text-align:right;">325</div>
<div class="t" style="top:511.69px;font-size:11px;line-height:11px;font-weight:400;color:#1a1a1a;right:1254.5px;text-align:right;">2024</div>
<div class="t" style="top:511.69px;font-size:11px;line-height:11px;font-weight:400;color:#1a1a1a;left:648px;text-decoration:line-through;">03/07/2024</div>
<div class="t" style="top:511.69px;font-size:11px;line-height:11px;font-weight:400;color:#1a1a1a;left:728px;text-decoration:line-through;">03/07/2024</div>
<div class="t" style="top:511.69px;font-size:11px;line-height:11px;font-weight:400;color:#1a1a1a;left:802px;">03/07/2024</div>
<div class="t" style="top:511.69px;font-size:11px;line-height:11px;font-weight:400;color:#1a1a1a;right:748.5px;text-align:right;">0</div>
<div class="a" style="left:0px;top:530px;width:1500px;height:24px;background:#c1dcf6;"></div>
<div class="a" style="left:0px;top:530px;width:116px;height:24px;background:#fdf8ec;"></div>
<div class="a" style="left:0px;top:554px;width:1500px;height:1px;background:#e2e2e2;"></div>
<div class="t" style="top:536.69px;font-size:11px;line-height:11px;font-weight:400;color:#1a1a1a;right:1782.5px;text-align:right;">12010014</div>
<div class="t" style="top:536.69px;font-size:11px;line-height:11px;font-weight:400;color:#1a1a1a;left:119px;letter-spacing:-0.55px;">MONOFASE UFF TRIBUTARIO</div>
<div class="t" style="top:536.69px;font-size:11px;line-height:11px;font-weight:400;color:#111;right:1521.5px;text-align:right;">0,00</div>
<div class="t" style="top:536.69px;font-size:11px;line-height:11px;font-weight:400;color:#1a1a1a;right:1463.5px;text-align:right;">391,00</div>
<div class="t" style="top:536.69px;font-size:11px;line-height:11px;font-weight:400;color:#1a1a1a;right:1393.5px;text-align:right;">325</div>
<div class="t" style="top:536.69px;font-size:11px;line-height:11px;font-weight:400;color:#1a1a1a;right:1254.5px;text-align:right;">2024</div>
<div class="t" style="top:536.69px;font-size:11px;line-height:11px;font-weight:400;color:#1a1a1a;left:648px;text-decoration:line-through;">03/07/2024</div>
<div class="t" style="top:536.69px;font-size:11px;line-height:11px;font-weight:400;color:#1a1a1a;left:728px;text-decoration:line-through;">03/07/2024</div>
<div class="t" style="top:536.69px;font-size:11px;line-height:11px;font-weight:400;color:#1a1a1a;left:802px;">03/07/2024</div>
<div class="t" style="top:536.69px;font-size:11px;line-height:11px;font-weight:400;color:#1a1a1a;right:748.5px;text-align:right;">0</div>
<div class="a" style="left:116px;top:555px;width:186px;height:24px;background:#e8e8e8;"></div>
<div class="a" style="left:645px;top:555px;width:220px;height:24px;background:#e8e8e8;"></div>
<div class="a" style="left:1151px;top:555px;width:350px;height:24px;background:#e8e8e8;"></div>
<div class="a" style="left:0px;top:579px;width:1500px;height:1px;background:#e2e2e2;"></div>
<div class="a" style="left:0px;top:934px;width:1550px;height:17px;background:#efefef;"></div>
<div class="a" style="left:0px;top:934px;width:39px;height:17px;background:#fdfdfd;"></div>
<div class="a" style="left:37px;top:934px;width:15px;height:17px;background:#eef6fc;"></div>
<div class="a" style="left:0px;top:934px;width:11px;height:17px;background:#eef6fc;"></div>
<svg class="a" style="left:0px;top:938px;" width="10" height="10" viewBox="0 938 10 10"><path d="M0.2,942.6 L4,939 V946.2 Z M4,942.6 L7.8,939 V946.2 Z" fill="#4c5c7a"/></svg>
<div class="t" style="top:938.19px;font-size:11px;line-height:11px;font-weight:400;color:#111;left:16.3px;">4/4</div>
<svg class="a" style="left:40px;top:938px;" width="12" height="10" viewBox="40 938 12 10"><path d="M41,939 L44.6,942.6 L41,946.2 Z M44.6,939 L48.2,942.6 L44.6,946.2 Z" fill="#4c5c7a"/><rect x="48.4" y="939" width="1.4" height="7.2" fill="#4c5c7a"/></svg>
<svg class="a" style="left:59px;top:937px;" width="8" height="12" viewBox="59 937 8 12"><path d="M65.2,938.2 V947 L60,942.6 Z" fill="#b9bdc8"/></svg>
<svg class="a" style="left:1540px;top:937px;" width="8" height="12" viewBox="1540 937 8 12"><path d="M1540.6,938.2 V947 L1545.6,942.6 Z" fill="#b9bdc8"/></svg>
<div class="a" style="left:0px;top:951px;width:1550px;height:1px;background:#a9b3c2;"></div>
<div class="a" style="left:1550px;top:392px;width:1px;height:560px;background:#ededed;"></div>
<div class="a" style="left:1551px;top:392px;width:2px;height:560px;background:#e2f3f8;"></div>
<div class="a" style="left:1553px;top:392px;width:1px;height:560px;background:#1d5470;"></div>
<div class="t" style="top:397.69px;font-size:11px;line-height:11px;font-weight:400;color:#2e6c93;left:1562.6px;letter-spacing:-0.27px;">SCADENZE PARTITA: 11010003 2024   325</div>
<div class="a" style="left:1554px;top:412px;width:342px;height:1px;background:#1d5470;"></div>
<svg class="a" style="left:1564px;top:418px;" width="16" height="16" viewBox="1564 418 16 16"><rect x="1564.8" y="418.8" width="13.6" height="13.6" rx="2" fill="none" stroke="#6a9bb9" stroke-width="1.5"/><line x1="1567.5" y1="422.0" x2="1575.8" y2="422.0" stroke="#8fb6cc" stroke-width="1.1"/><line x1="1567.5" y1="423.9" x2="1575.8" y2="423.9" stroke="#8fb6cc" stroke-width="1.1"/><line x1="1567.5" y1="425.8" x2="1575.8" y2="425.8" stroke="#8fb6cc" stroke-width="1.1"/><line x1="1567.5" y1="427.7" x2="1575.8" y2="427.7" stroke="#8fb6cc" stroke-width="1.1"/><line x1="1567.5" y1="429.6" x2="1575.8" y2="429.6" stroke="#8fb6cc" stroke-width="1.1"/></svg>
<div class="t" style="top:419.84px;font-size:12px;line-height:12px;font-weight:400;color:#1a1a2a;left:1584.5px;letter-spacing:-0.05px;">Funzioni griglia</div>
<div class="a" style="left:1671px;top:415px;width:29px;height:21px;border-left:1px solid #c8c8c8;border-top:1px solid #dcdcdc;background:#f3f4f5;"></div>
<svg class="a" style="left:1679px;top:418px;" width="16" height="16" viewBox="1679 418 16 16"><path d="M1680,420 H1692.5 V421.5 L1688,427 V432.5 L1686.5,432.5 L1685,431 V427 L1680,421.5 Z" fill="none" stroke="#6a9bb9" stroke-width="1.4" stroke-linejoin="round"/><path d="M1684.5,425 H1688.5 M1686.5,425 V429" stroke="#6a9bb9" stroke-width="1.4"/></svg>
<svg class="a" style="left:1759px;top:419px;" width="16" height="16" viewBox="1759 419 16 16"><line x1="1766.6" y1="419" x2="1766.6" y2="429.5" stroke="#6ba3c3" stroke-width="1.2"/><polyline points="1762.3,425.3 1766.6,429.6 1770.9,425.3" fill="none" stroke="#6ba3c3" stroke-width="1.2"/><line x1="1759" y1="431.8" x2="1774" y2="431.8" stroke="#6ba3c3" stroke-width="1.3"/></svg>
<div class="t" style="top:420.52px;font-size:11.2px;line-height:11.2px;font-weight:400;color:#1a1a2a;left:1779.6px;">Esporta</div>
<svg class="a" style="left:1820px;top:423px;" width="8" height="6" viewBox="1820 423 8 6"><path d="M1821,424 H1826.5 L1823.75,427.2 Z" fill="#111"/></svg>
<svg class="a" style="left:1841px;top:418px;" width="17" height="16" viewBox="1841 418 17 16"><polyline points="1841.6,418.2 1841.6,432.4 1856.3,432.4" fill="none" stroke="#6a9bb9" stroke-width="1.1"/><polyline points="1844.3,429.6 1847,426 1849.2,428 1852.8,420 1855.3,424" fill="none" stroke="#6a9bb9" stroke-width="1.2"/></svg>
<svg class="a" style="left:1872px;top:418px;" width="14" height="16" viewBox="1872 418 14 16"><rect x="1872.0" y="419" width="5" height="3" fill="#5c8dad"/><rect x="1878.5" y="419" width="5" height="3" fill="#5c8dad"/><rect x="1872.0" y="424" width="5" height="3" fill="#5c8dad"/><rect x="1878.5" y="424" width="5" height="3" fill="#5c8dad"/><rect x="1872.0" y="429" width="5" height="3" fill="#5c8dad"/><rect x="1878.5" y="429" width="5" height="3" fill="#5c8dad"/></svg>
<div class="a" style="left:1555px;top:438px;width:340px;height:1px;background:#4f4f4f;"></div>
<div class="a" style="left:1895px;top:413px;width:1px;height:26px;background:#4f4f4f;"></div>
<div class="a" style="left:1554px;top:455px;width:342px;height:21px;background:#f2f2f2;"></div>
<div class="a" style="left:1554px;top:455px;width:342px;height:1px;background:#96a4b4;"></div>
<div class="a" style="left:1554px;top:475px;width:342px;height:1px;background:#96a4b4;"></div>
<div class="a" style="left:1554px;top:456px;width:60px;height:19px;background:#fff;"></div>
<div class="a" style="left:1614px;top:455px;width:1px;height:21px;background:#96a4b4;"></div>
<div class="a" style="left:1698px;top:455px;width:1px;height:21px;background:#96a4b4;"></div>
<div class="a" style="left:1798px;top:455px;width:1px;height:21px;background:#96a4b4;"></div>
<div class="a" style="left:1890px;top:455px;width:1px;height:21px;background:#96a4b4;"></div>
<div class="t" style="top:460.19px;font-size:11px;line-height:11px;font-weight:400;color:#1a1a2a;left:1559px;">Pag.</div>
<div class="t" style="top:460.19px;font-size:11px;line-height:11px;font-weight:400;color:#1a1a2a;left:1620px;">Scadenza</div>
<div class="t" style="top:460.19px;font-size:11px;line-height:11px;font-weight:400;color:#1a1a2a;left:1704px;">Importo</div>
<div class="t" style="top:460.19px;font-size:11px;line-height:11px;font-weight:400;color:#1a1a2a;left:1803px;">Tipo pag</div>
<div class="a" style="left:1554px;top:476px;width:60px;height:24px;background:#fff;"></div>
<div class="a" style="left:1615px;top:476px;width:84px;height:24px;background:#c1dcf6;"></div>
<div class="a" style="left:1799px;top:476px;width:92px;height:24px;background:#c1dcf6;"></div>
<div class="a" style="left:1699px;top:476px;width:100px;height:24px;background:#f08080;"></div>
<div class="a" style="left:1554px;top:500px;width:336px;height:1px;background:#e2e2e2;"></div>
<div class="a" style="left:1576px;top:481px;width:13px;height:13px;border:1px solid #c8c8c8;border-radius:3px;background:#fff;"></div>
<div class="t" style="top:482.69px;font-size:11px;line-height:11px;font-weight:400;color:#1a1a1a;left:1618px;">03/08/2024</div>
<div class="t" style="top:482.69px;font-size:11px;line-height:11px;font-weight:400;color:#1a1a1a;right:100.5px;text-align:right;">1.150,00</div>
<div class="t" style="top:482.69px;font-size:11px;line-height:11px;font-weight:400;color:#1a1a1a;left:1802px;letter-spacing:-0.2px;">R.B. o RIBA</div>
<div class="a" style="left:1554px;top:501px;width:60px;height:24px;background:#f0f7fd;"></div>
<div class="a" style="left:1615px;top:501px;width:84px;height:24px;background:#e8e8e8;"></div>
<div class="a" style="left:1799px;top:501px;width:92px;height:24px;background:#e8e8e8;"></div>
<div class="a" style="left:1699px;top:501px;width:100px;height:24px;background:#f08080;"></div>
<div class="a" style="left:1554px;top:525px;width:336px;height:1px;background:#e2e2e2;"></div>
<div class="a" style="left:1576px;top:506px;width:13px;height:13px;border:1px solid #c8c8c8;border-radius:3px;background:#fff;"></div>
<div class="t" style="top:507.69px;font-size:11px;line-height:11px;font-weight:400;color:#1a1a1a;left:1618px;">03/09/2024</div>
<div class="t" style="top:507.69px;font-size:11px;line-height:11px;font-weight:400;color:#1a1a1a;right:100.5px;text-align:right;">1.150,00</div>
<div class="t" style="top:507.69px;font-size:11px;line-height:11px;font-weight:400;color:#1a1a1a;left:1802px;letter-spacing:-0.2px;">R.B. o RIBA</div>
<div class="a" style="left:1554px;top:843px;width:342px;height:17px;background:#efefef;"></div>
<div class="a" style="left:1554px;top:843px;width:44px;height:17px;background:#fdfdfd;"></div>
<div class="a" style="left:1598px;top:843px;width:15px;height:17px;background:#eef6fc;"></div>
<svg class="a" style="left:1556px;top:846px;" width="12" height="10" viewBox="1556 846 12 10"><path d="M1558.6,848 V854.4 H1557.4 V848 Z M1558.8,851.2 L1562,848 V854.4 Z M1562,851.2 L1565.2,848 V854.4 Z" fill="#8c8c8c"/></svg>
<div class="t" style="top:846.69px;font-size:11px;line-height:11px;font-weight:400;color:#111;left:1575.5px;">1/2</div>
<svg class="a" style="left:1600px;top:846px;" width="12" height="10" viewBox="1600 846 12 10"><path d="M1600.6,848 L1603.8,851.2 L1600.6,854.4 Z M1603.8,848 L1607,851.2 L1603.8,854.4 Z" fill="#4c5c7a"/><rect x="1607.2" y="848" width="1.3" height="6.4" fill="#4c5c7a"/></svg>
<svg class="a" style="left:1617px;top:845px;" width="8" height="12" viewBox="1617 845 8 12"><path d="M1624.6,847 V855.4 L1619.6,851.2 Z" fill="#b9bdc8"/></svg>
<svg class="a" style="left:1885px;top:845px;" width="8" height="12" viewBox="1885 845 8 12"><path d="M1887.4,847 V855.4 L1892.4,851.2 Z" fill="#b9bdc8"/></svg>
<div class="a" style="left:1554px;top:860px;width:325px;height:91px;background:#eff7fd;"></div>
<div class="a" style="left:1879px;top:860px;width:17px;height:91px;background:#efefef;"></div>
<svg class="a" style="left:1880px;top:862px;" width="14" height="70" viewBox="1880 862 14 70"><path d="M1882.5,870.5 H1890.5 L1886.5,866 Z M1882.5,937 H1890.5 L1886.5,941.5 Z" fill="#b9bdc8"/></svg>
<div class="t" style="top:862.11px;font-size:11.6px;line-height:11.6px;font-weight:400;color:#1a1a1a;font-family:'Liberation Mono', monospace;left:1558px;-webkit-text-stroke:0.25px #1a1a1a;letter-spacing:0.05px;">Giroc. IVA ind. al SALVA</div>
<div class="a" style="left:1553px;top:951px;width:343px;height:1px;background:#1d5470;"></div>
<div class="t" style="top:961.69px;font-size:11px;line-height:11px;font-weight:400;color:#1a1a1a;left:0px;letter-spacing:-0.1px;">IMPONIBILE: 2.300,00,</div>
<div class="t" style="top:961.69px;font-size:11px;line-height:11px;font-weight:400;color:#1a1a1a;left:125px;">IVA: 0,00,</div>
<div class="t" style="top:961.69px;font-size:11px;line-height:11px;font-weight:400;color:#1a1a1a;left:186.5px;letter-spacing:-0.1px;">TOTALI Dare: 2.691,00,</div>
<div class="t" style="top:961.69px;font-size:11px;line-height:11px;font-weight:400;color:#1a1a1a;left:316.5px;">Avere: 2.691,00,</div>
<div class="t" style="top:961.69px;font-size:11px;line-height:11px;font-weight:400;color:#1a1a1a;left:412px;">Diff.: 0,00</div>
<div class="t" style="top:985.19px;font-size:11px;line-height:11px;font-weight:400;color:#2424b0;left:0px;">Inserire il cod. del fornitore ed il tot.documento</div>
<div class="t" style="top:961.69px;font-size:11px;line-height:11px;font-weight:400;color:#222;left:1718px;">Saldo attuale</div>
<div class="a" style="left:1808px;top:956px;width:80px;height:20px;background:#f0f7fe;"></div>
<div class="t" style="top:961.19px;font-size:11px;line-height:11px;font-weight:400;color:#222;right:11.5px;text-align:right;">0,00</div>
</body></html>
